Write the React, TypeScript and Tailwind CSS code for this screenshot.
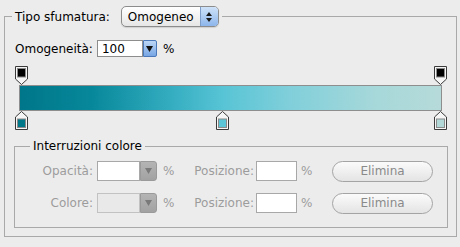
import React from "react";

const topStops = [
  { loc: 0, color: "#000" },
  { loc: 100, color: "#000" },
];
const bottomStops = [
  { loc: 0, color: "#00788a" },
  { loc: 48, color: "#5bc6d7" },
  { loc: 100, color: "#b3d8d8" },
];

function TopStop() {
  return (
    <svg width="13" height="19" viewBox="0 0 13 19">
      <path d="M0.5 0.5H12.5V13L6.5 18.5L0.5 13Z" fill="#f6f6f6" stroke="#3a3a3a" />
      <rect x="2.5" y="2.5" width="8" height="8.5" fill="#000" stroke="#8a8a8a" />
    </svg>
  );
}

function BottomStop({ color }: { color: string }) {
  return (
    <svg width="13" height="19" viewBox="0 0 13 19">
      <path d="M6.5 0.5L12.5 6V18.5H0.5V6Z" fill="#f6f6f6" stroke="#3a3a3a" />
      <rect x="2.5" y="8" width="8" height="8.5" fill={color} stroke="#8a8a8a" />
    </svg>
  );
}

function Elimina() {
  return (
    <div className="flex h-[21px] w-[101px] items-center justify-center rounded-full border border-[#a4a4a4] bg-linear-to-b from-[#fbfbfb] to-[#e4e4e4] text-[12px] text-[#8a8a8a]">
      Elimina
    </div>
  );
}

function SmallCombo({ fieldBg, fieldBorder }: { fieldBg: string; fieldBorder: string }) {
  return (
    <div className="flex h-[20px] w-[60px]">
      <div className={`h-full w-[43px] border ${fieldBorder} ${fieldBg}`} />
      <div className="flex h-full w-[17px] items-center justify-center rounded-r-[3px] border border-[#9a9a9a] bg-linear-to-b from-[#b4b4b4] to-[#a2a2a2]">
        <svg width="7" height="6" viewBox="0 0 7 6">
          <path d="M0 0H7L3.5 6Z" fill="#7a7a7a" />
        </svg>
      </div>
    </div>
  );
}

function StopRow({ label, combo }: { label: string; combo: React.ReactNode }) {
  return (
    <div className="flex h-[22px] items-center text-[12px] text-[#9c9c9c]">
      <div className="w-[78px] text-right">{label}</div>
      <div className="ml-[4px]">{combo}</div>
      <div className="ml-[6px] w-[24px]">%</div>
      <div className="w-[69px] pr-[2px] text-right">Posizione:</div>
      <div className="h-[20px] w-[41px] border border-[#a8a8a8] bg-white" />
      <div className="ml-[4px] w-[31px]">%</div>
      <Elimina />
    </div>
  );
}

export default function App() {
  return (
    <div className="h-[247px] w-[460px] bg-[#ececec] pl-[4px] pt-[6px] font-['DejaVu_Sans',sans-serif] text-[12px] text-black">
      <fieldset className="w-[453px] border border-[#a9a9a9] pb-[8px]">
        <legend className="ml-[7px] flex h-[21px] items-center px-[3px]">
          <span>Tipo sfumatura:</span>
          <div className="ml-[11px] flex h-[21px] w-[98px] overflow-hidden rounded-[5px] border border-[#8c8c8c] bg-linear-to-b from-white to-[#e6e6e6] shadow-[0_1px_1px_rgba(0,0,0,0.12)]">
            <span className="flex flex-1 items-center pl-[6px]">Omogeneo</span>
            <span className="flex w-[18px] flex-col items-center justify-center gap-[2px] border-l border-[#7d9cc8] bg-linear-to-b from-[#cfe2f8] to-[#8db6ec]">
              <svg width="6" height="4" viewBox="0 0 6 4">
                <path d="M3 0L6 4H0Z" fill="#1a1a1a" />
              </svg>
              <svg width="6" height="4" viewBox="0 0 6 4">
                <path d="M0 0H6L3 4Z" fill="#1a1a1a" />
              </svg>
            </span>
          </div>
        </legend>

        <div className="mt-[13px] flex h-[17px] items-center pl-[10px]">
          <span>Omogeneità:</span>
          <div className="ml-[4px] flex h-[17px] w-[60px]">
            <div className="flex h-full w-[46px] items-center border border-[#8d8d8d] bg-white pl-[4px]">100</div>
            <div className="flex h-full w-[14px] items-center justify-center rounded-r-[2px] border border-[#4a78b8] bg-linear-to-b from-[#bcd6f5] to-[#77a6e4]">
              <svg width="7" height="6" viewBox="0 0 7 6">
                <path d="M0 0H7L3.5 6Z" fill="#111" />
              </svg>
            </div>
          </div>
          <span className="ml-[6px]">%</span>
        </div>

        <div className="relative ml-[10px] mt-[9px] h-[19px] w-[432px]">
          {topStops.map((s) => (
            <div key={s.loc} className="absolute top-0" style={{ left: `${(s.loc * 419) / 100}px` }}>
              <TopStop />
            </div>
          ))}
        </div>
        <div className="ml-[14px] h-[26px] w-[423px] border border-[#8e8e8e] bg-[linear-gradient(to_right,#00768a_0%,#07889a_17%,#35adc1_36%,#57c4d5_48%,#80cfda_64%,#a6d8da_84%,#b6dad9_100%)]" />
        <div className="relative ml-[10px] h-[19px] w-[432px]">
          {bottomStops.map((s) => (
            <div key={s.loc} className="absolute top-0" style={{ left: `${(s.loc * 419) / 100}px` }}>
              <BottomStop color={s.color} />
            </div>
          ))}
        </div>

        <fieldset className="ml-[9px] mt-[9px] w-[434px] border border-[#a9a9a9] pb-[13px]">
          <legend className="ml-[15px] px-[3px] leading-[15px]">Interruzioni colore</legend>
          <div className="mt-[6px] flex flex-col gap-[10px]">
            <StopRow label="Opacità:" combo={<SmallCombo fieldBg="bg-white" fieldBorder="border-[#a8a8a8]" />} />
            <StopRow label="Colore:" combo={<SmallCombo fieldBg="bg-[#e9e9e9]" fieldBorder="border-[#c2c2c2]" />} />
          </div>
        </fieldset>
      </fieldset>
    </div>
  );
}
